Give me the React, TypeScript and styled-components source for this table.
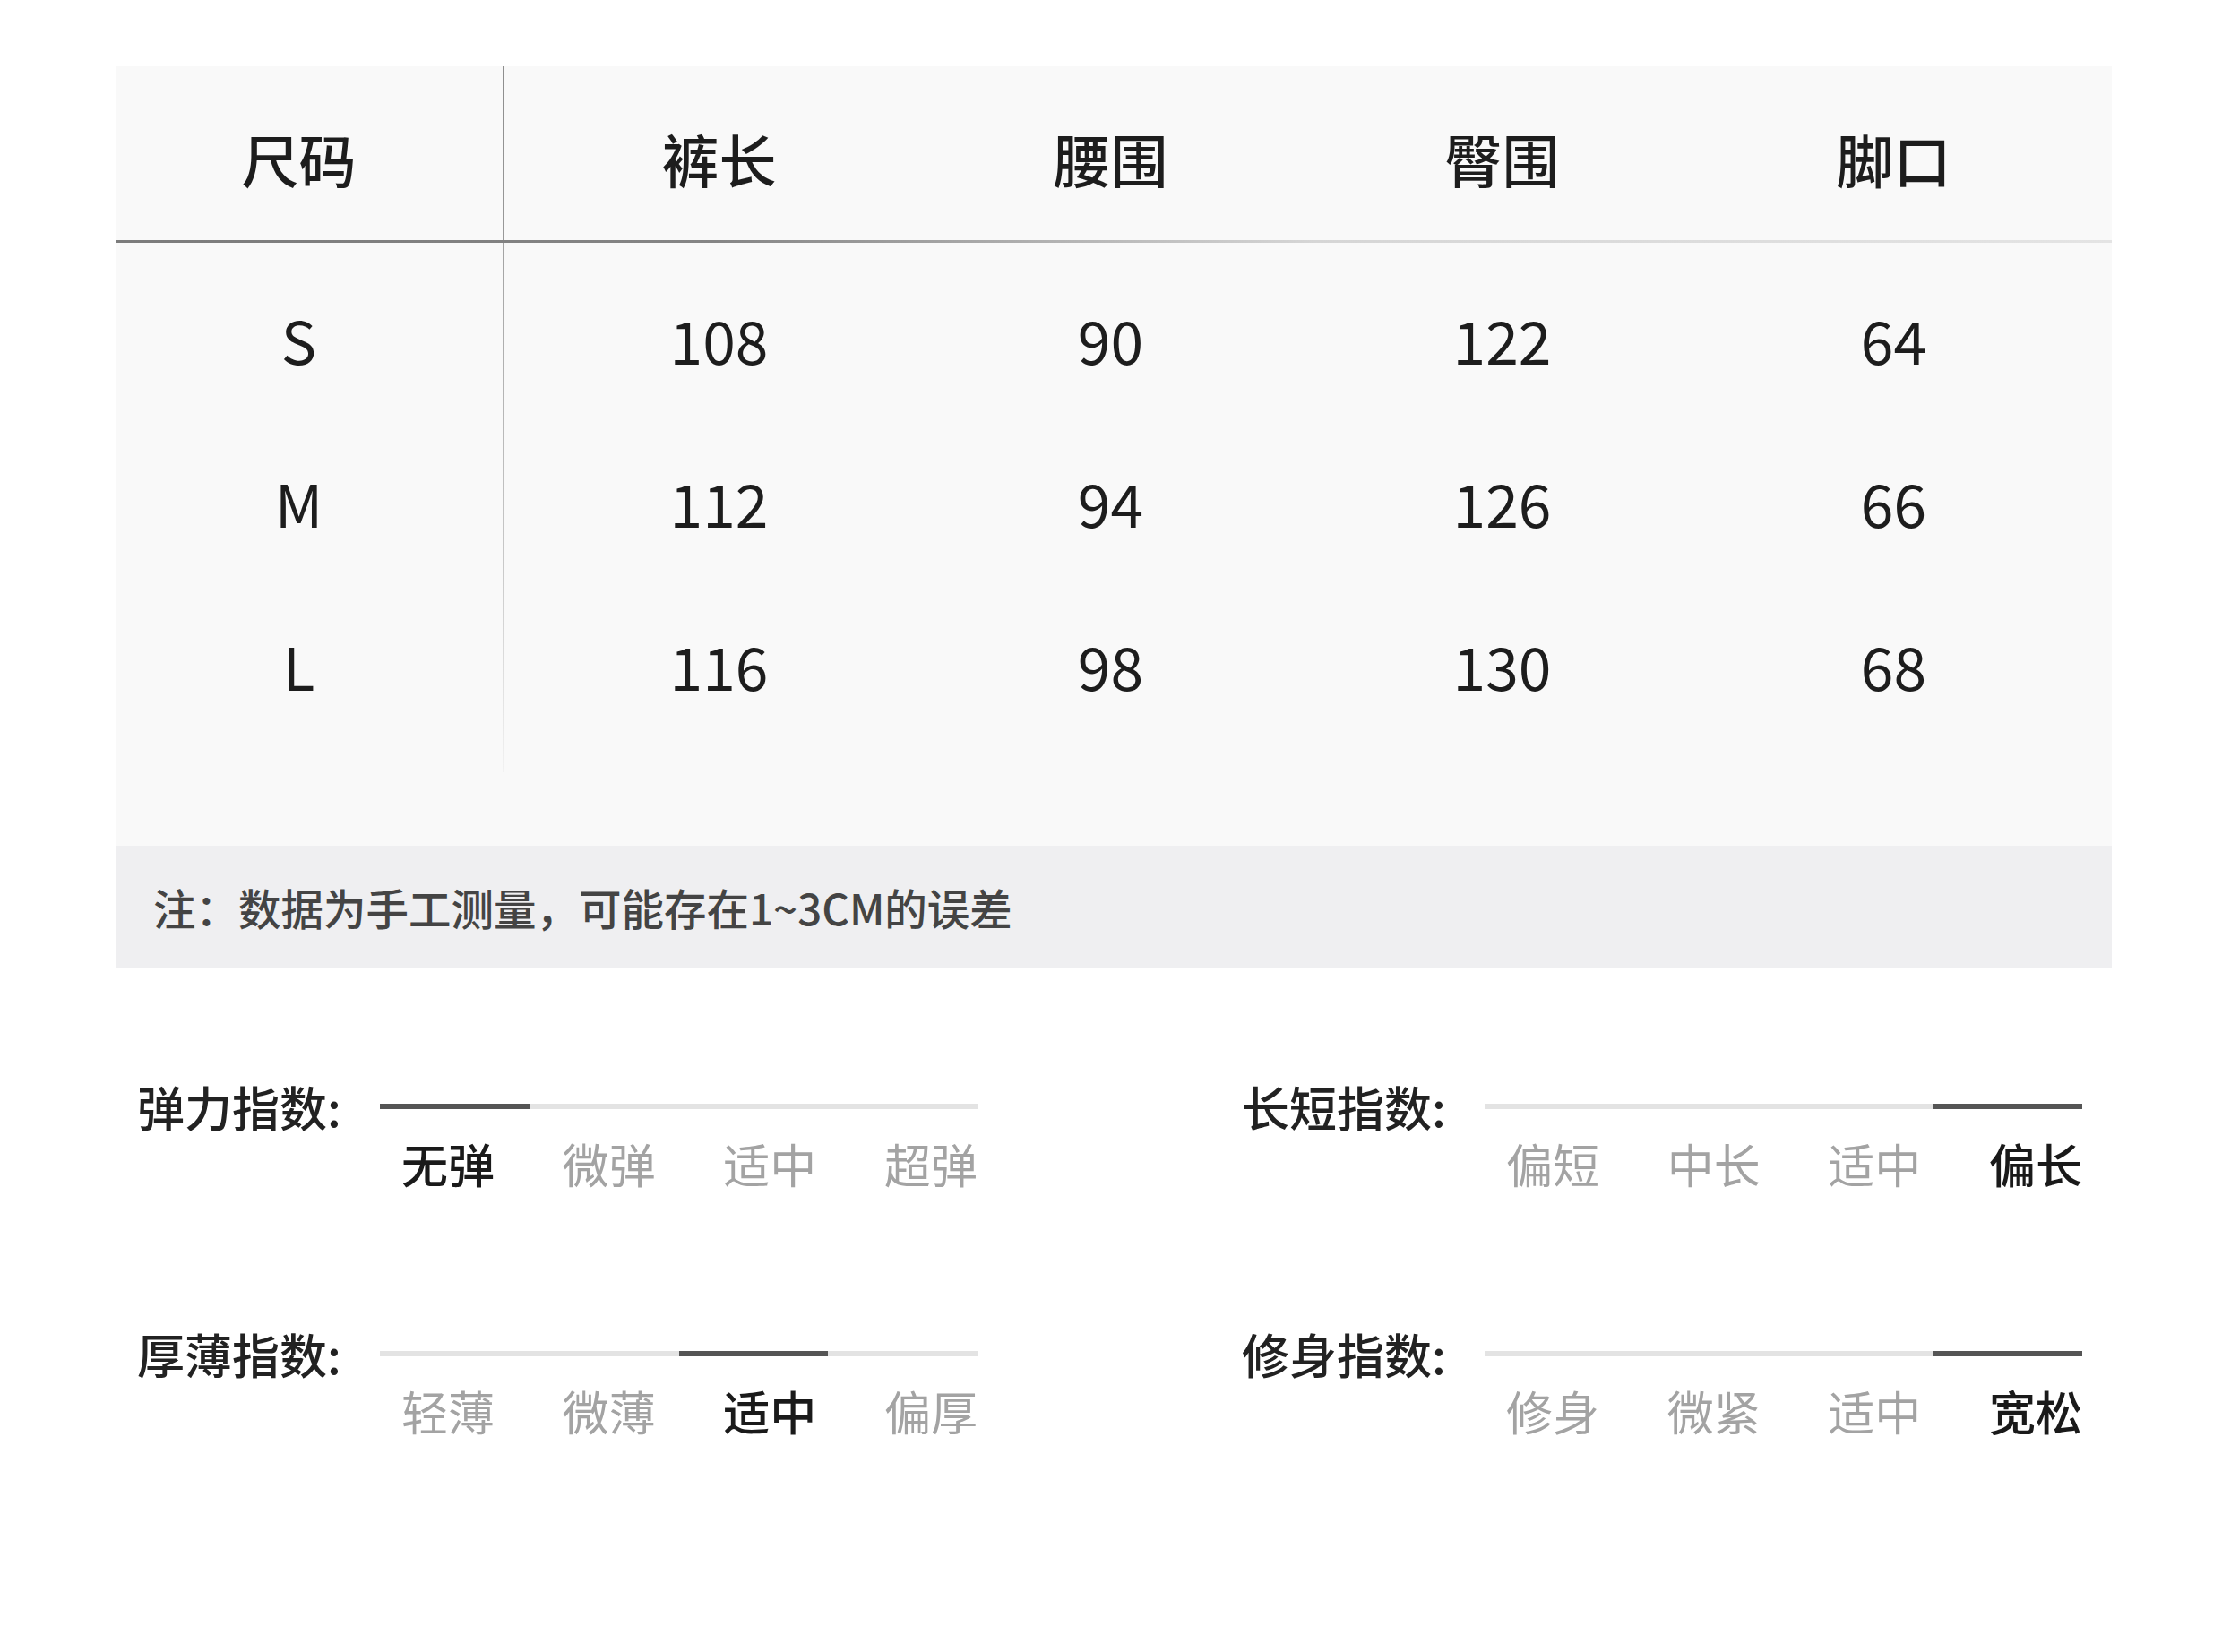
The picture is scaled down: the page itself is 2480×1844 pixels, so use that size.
import styled, { createGlobalStyle } from "styled-components";

const headers = ["裤长", "腰围", "臀围", "脚口"];

const rows = [
  { size: "S", values: ["108", "90", "122", "64"] },
  { size: "M", values: ["112", "94", "126", "66"] },
  { size: "L", values: ["116", "98", "130", "68"] },
];

const indices = [
  { label: "弹力指数:", options: ["无弹", "微弹", "适中", "超弹"], active: 0 },
  { label: "长短指数:", options: ["偏短", "中长", "适中", "偏长"], active: 3 },
  { label: "厚薄指数:", options: ["轻薄", "微薄", "适中", "偏厚"], active: 2 },
  { label: "修身指数:", options: ["修身", "微紧", "适中", "宽松"], active: 3 },
];

export default function App() {
  return (
    <>
      <GlobalStyle />
      <Page>
        <SizeTable>
          <HeaderRow>
            <HeaderSizeCell>尺码</HeaderSizeCell>
            <HeaderValues>
              {headers.map((h) => (
                <HeaderCell key={h}>{h}</HeaderCell>
              ))}
            </HeaderValues>
          </HeaderRow>
          <TableBody>
            <SizeColumn>
              {rows.map((r) => (
                <SizeCell key={r.size}>{r.size}</SizeCell>
              ))}
            </SizeColumn>
            <BodyValues>
              {rows.map((r) =>
                r.values.map((v, i) => <ValueCell key={r.size + i}>{v}</ValueCell>)
              )}
            </BodyValues>
          </TableBody>
        </SizeTable>
        <NoteBar>注：数据为手工测量，可能存在1~3CM的误差</NoteBar>

        <IndexSection>
          {indices.map((item) => (
            <IndexItem key={item.label}>
              <IndexLabel>{item.label}</IndexLabel>
              <Track>
                {item.options.map((o, i) => (
                  <TrackSegment key={o} $active={i === item.active} />
                ))}
              </Track>
              <Options>
                {item.options.map((o, i) => (
                  <Option key={o} $active={i === item.active}>
                    {o}
                  </Option>
                ))}
              </Options>
            </IndexItem>
          ))}
        </IndexSection>
      </Page>
    </>
  );
}

// Styled Components
const GlobalStyle = createGlobalStyle`
  body {
    margin: 0;
    background: #ffffff;
    font-family: "Noto Sans CJK SC", "Noto Sans", sans-serif;
    color: #1d1d1d;
  }
`;

const Page = styled.div`
  width: 2480px;
  min-height: 1844px;
  padding: 74px 123px 0 130px;
  box-sizing: border-box;
`;

const SizeTable = styled.div`
  background: #f9f9f9;
  padding-bottom: 82px;
`;

const HeaderRow = styled.div`
  display: flex;
  height: 194px;
  border-bottom: 3px solid;
  border-image: linear-gradient(
      90deg,
      #7c7c7c 0%,
      #858585 30%,
      #d6d6d6 60%,
      #e4e4e4 100%
    )
    1;
`;

const HeaderSizeCell = styled.div`
  width: 433px;
  box-sizing: border-box;
  padding: 10px 24px 0 0;
  display: flex;
  align-items: center;
  justify-content: center;
  font-size: 64px;
  font-weight: 500;
  border-right: 2px solid;
  border-image: linear-gradient(#8e8e8e, #999999) 1;
`;

const HeaderValues = styled.div`
  display: grid;
  grid-template-columns: repeat(4, 437px);
  padding-left: 21px;
`;

const HeaderCell = styled.div`
  padding-top: 10px;
  display: flex;
  align-items: center;
  justify-content: center;
  font-size: 64px;
  font-weight: 500;
`;

const TableBody = styled.div`
  display: flex;
`;

const SizeColumn = styled.div`
  width: 433px;
  box-sizing: border-box;
  padding: 16px 24px 29px 0;
  border-right: 2px solid;
  border-image: linear-gradient(#a3a3a3, #c8c8c8 60%, #f2f2f2) 1;
`;

const SizeCell = styled.div`
  height: 182px;
  display: flex;
  align-items: center;
  justify-content: center;
  font-size: 66px;
`;

const BodyValues = styled.div`
  display: grid;
  grid-template-columns: repeat(4, 437px);
  grid-auto-rows: 182px;
  padding: 16px 0 0 21px;
`;

const ValueCell = styled.div`
  display: flex;
  align-items: center;
  justify-content: center;
  font-size: 66px;
`;

const NoteBar = styled.div`
  height: 136px;
  background: #efeff1;
  display: flex;
  align-items: center;
  padding-left: 41px;
  font-size: 47.5px;
  font-weight: 500;
  color: #444444;
`;

const IndexSection = styled.div`
  display: grid;
  grid-template-columns: 938px 938px;
  column-gap: 295px;
  row-gap: 152px;
  margin: 125px 0 0 23px;
`;

const IndexItem = styled.div`
  display: grid;
  grid-template-columns: 271px 667px;
  grid-template-rows: 60px 60px;
  row-gap: 4px;
`;

const IndexLabel = styled.div`
  font-size: 53px;
  line-height: 60px;
  font-weight: 500;
  color: #222222;
  white-space: nowrap;
`;

const Track = styled.div`
  display: flex;
  align-self: center;
  height: 6px;
`;

const TrackSegment = styled.div<{ $active: boolean }>`
  flex: 1;
  background: ${({ $active }) => ($active ? "#555555" : "#e3e3e3")};
`;

const Options = styled.div`
  grid-column: 2;
  display: flex;
  justify-content: space-between;
  padding-left: 24px;
`;

const Option = styled.span<{ $active: boolean }>`
  font-size: 52px;
  line-height: 60px;
  color: ${({ $active }) => ($active ? "#1a1a1a" : "#a3a3a3")};
  font-weight: ${({ $active }) => ($active ? 500 : 400)};
`;
